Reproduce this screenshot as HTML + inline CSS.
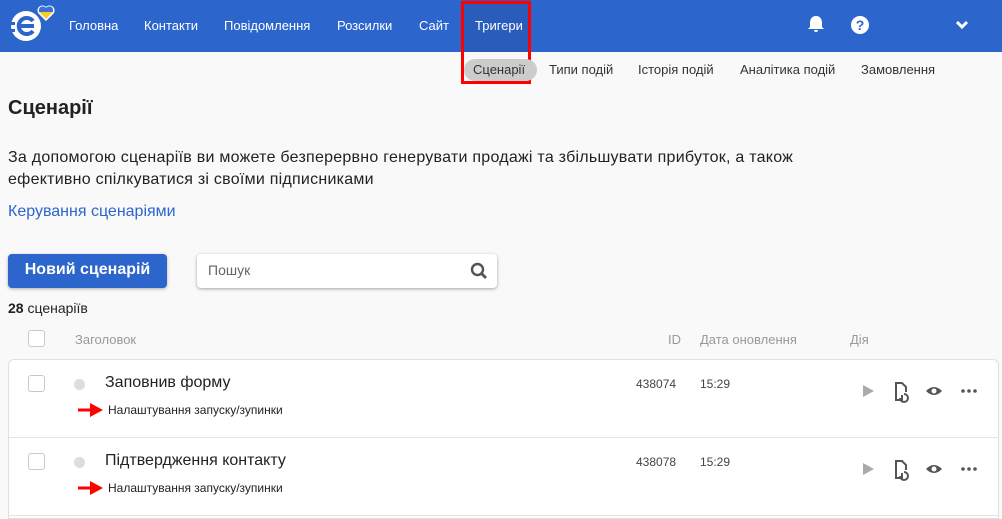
<!DOCTYPE html>
<html><head><meta charset="utf-8"><style>
*{box-sizing:border-box;margin:0;padding:0}
body{width:1002px;height:519px;overflow:hidden;background:#f9f9f9;font-family:"Liberation Sans",sans-serif;color:#222;position:relative}
.nav{position:absolute;left:0;top:0;width:1002px;height:52px;background:#2c65cc}
.nav a{position:absolute;top:18px;color:#fff;font-size:13px;text-decoration:none}
.abs{position:absolute}
.sub{position:absolute;top:62px;font-size:13px;color:#333}
.cb{position:absolute;width:17px;height:17px;border:1px solid #c8c8c8;border-radius:3px;background:#fff}
.dot{position:absolute;width:11px;height:11px;border-radius:50%;background:#ddd}
</style></head><body>
<div class="nav">
<svg class="abs" style="left:6px;top:4px" width="50" height="40" viewBox="0 0 50 40">
<circle cx="20" cy="22" r="15" fill="#fff"/>
<path d="M12 22 H28 M27 17 A8 8 0 1 0 27 27" stroke="#2c65cc" stroke-width="4" fill="none"/>
<rect x="4" y="18" width="5" height="3" fill="#2c65cc"/><rect x="4" y="25" width="5" height="3" fill="#2c65cc"/>
<path d="M40 16 L33 9 A4 4 0 0 1 40 4 A4 4 0 0 1 47 9 Z" fill="#f5d020" stroke="#fff" stroke-width="1.5"/>
<path d="M33 5 A4 4 0 0 1 40 4 A4 4 0 0 1 47 5 L47 8 L33 8Z" fill="#3a70d8"/>
</svg>
<a style="left:69px">Головна</a><a style="left:144px">Контакти</a><a style="left:224px">Повідомлення</a><a style="left:337px">Розсилки</a><a style="left:419px">Сайт</a>
<div class="abs" style="left:463px;top:0;width:68px;height:52px;background:#2a5cbc"></div>
<a style="left:475px">Тригери</a>
<svg class="abs" style="left:806px;top:14px" width="20" height="20" viewBox="0 0 20 20"><path d="M10 2 C6 2 4 5 4 9 V13 L2 15 H18 L16 13 V9 C16 5 14 2 10 2Z M8 16 A2 2 0 0 0 12 16Z" fill="#fff"/></svg>
<div class="abs" style="left:851px;top:16px;width:18px;height:18px;border-radius:50%;background:#fff;color:#2c65cc;font-weight:bold;font-size:14px;text-align:center;line-height:18px">?</div>
<svg class="abs" style="left:955px;top:20px" width="14" height="10" viewBox="0 0 14 10"><path d="M2 2 L7 7 L12 2" stroke="#fff" stroke-width="3" fill="none"/></svg>
</div>
<div class="abs" style="left:461px;top:1px;width:70px;height:83px;border:3px solid #f00"></div>
<div class="abs" style="left:464px;top:59px;width:73px;height:22px;background:#ccc;border-radius:11px"></div>
<div class="sub" style="left:473px">Сценарії</div>
<div class="sub" style="left:549px">Типи подій</div>
<div class="sub" style="left:638px">Історія подій</div>
<div class="sub" style="left:740px">Аналітика подій</div>
<div class="sub" style="left:861px">Замовлення</div>
<div class="abs" style="left:8px;top:97px;font-size:20px;font-weight:bold">Сценарії</div>
<div class="abs" style="left:8px;top:147px;font-size:16px;line-height:22px;width:820px;letter-spacing:0.25px">За допомогою сценаріїв ви можете безперервно генерувати продажі та збільшувати прибуток, а також ефективно спілкуватися зі своїми підписниками</div>
<div class="abs" style="left:8px;top:203px;font-size:16px;color:#2c65cc">Керування сценаріями</div>
<div class="abs" style="left:8px;top:254px;width:159px;height:34px;background:#2c65cc;border-radius:4px;color:#fff;font-size:16px;font-weight:bold;text-align:center;line-height:32px;box-shadow:0 1px 3px rgba(0,0,0,.3)">Новий сценарій</div>
<div class="abs" style="left:197px;top:254px;width:300px;height:34px;background:#fff;border-radius:4px;box-shadow:0 1px 3px rgba(0,0,0,.35)"><span class="abs" style="left:11px;top:8px;font-size:14px;color:#666">Пошук</span>
<svg class="abs" style="left:273px;top:8px" width="18" height="18" viewBox="0 0 18 18"><circle cx="7.5" cy="7.5" r="5.5" stroke="#555" stroke-width="2.4" fill="none"/><path d="M11.5 11.5 L16 16" stroke="#555" stroke-width="2.8"/></svg></div>
<div class="abs" style="left:8px;top:300px;font-size:14px"><b>28</b> сценаріїв</div>
<div class="cb" style="left:28px;top:330px"></div>
<div class="abs" style="left:75px;top:332px;font-size:13px;color:#999">Заголовок</div>
<div class="abs" style="left:668px;top:332px;font-size:13px;color:#999">ID</div>
<div class="abs" style="left:700px;top:332px;font-size:13px;color:#999">Дата оновлення</div>
<div class="abs" style="left:850px;top:332px;font-size:13px;color:#999">Дія</div>
<div class="abs" style="left:8px;top:359px;width:991px;height:160px;border:1px solid #e0e0e0;border-radius:6px 6px 0 0;background:#fff"></div>
<div class="abs" style="left:9px;top:437px;width:989px;height:1px;background:#e4e4e4"></div>
<div class="abs" style="left:9px;top:515px;width:989px;height:1px;background:#e4e4e4"></div>
<div class="cb" style="left:28px;top:375px"></div><div class="dot" style="left:74px;top:379px"></div>
<div class="abs" style="left:105px;top:374px;font-size:16px">Заповнив форму</div>
<div class="cb" style="left:28px;top:453px"></div><div class="dot" style="left:74px;top:457px"></div>
<div class="abs" style="left:105px;top:452px;font-size:16px">Підтвердження контакту</div>
<svg class="abs" style="left:78px;top:402px" width="26" height="16"><path d="M0 6.5 H12 V1 L25 8 L12 15 V9.5 H0Z" fill="#f00"/></svg>
<div class="abs" style="left:108px;top:403px;font-size:12px">Налаштування запуску/зупинки</div>
<svg class="abs" style="left:78px;top:480px" width="26" height="16"><path d="M0 6.5 H12 V1 L25 8 L12 15 V9.5 H0Z" fill="#f00"/></svg>
<div class="abs" style="left:108px;top:481px;font-size:12px">Налаштування запуску/зупинки</div>
<div class="abs" style="left:636px;top:377px;font-size:12px;color:#444">438074</div>
<div class="abs" style="left:700px;top:377px;font-size:12px;color:#444">15:29</div>
<div class="abs" style="left:636px;top:455px;font-size:12px;color:#444">438078</div>
<div class="abs" style="left:700px;top:455px;font-size:12px;color:#444">15:29</div>
<svg class="abs" style="left:860px;top:381px" width="120" height="22" viewBox="0 0 120 22">
<path d="M3 4 L14 10 L3 16Z" fill="#aaa"/>
<path d="M42 14 V19 H36 V2 H42 L46 6 V11" stroke="#555" stroke-width="2" fill="none"/><path d="M44 13 A4 4 0 1 1 40 17" stroke="#555" stroke-width="2" fill="none"/>
<path d="M66 10 Q74 2 82 10 Q74 18 66 10Z" fill="#555"/><circle cx="74" cy="10" r="2.5" fill="#fff"/>
<circle cx="103" cy="10" r="1.8" fill="#555"/><circle cx="109" cy="10" r="1.8" fill="#555"/><circle cx="115" cy="10" r="1.8" fill="#555"/>
</svg>
<svg class="abs" style="left:860px;top:459px" width="120" height="22" viewBox="0 0 120 22">
<path d="M3 4 L14 10 L3 16Z" fill="#aaa"/>
<path d="M42 14 V19 H36 V2 H42 L46 6 V11" stroke="#555" stroke-width="2" fill="none"/><path d="M44 13 A4 4 0 1 1 40 17" stroke="#555" stroke-width="2" fill="none"/>
<path d="M66 10 Q74 2 82 10 Q74 18 66 10Z" fill="#555"/><circle cx="74" cy="10" r="2.5" fill="#fff"/>
<circle cx="103" cy="10" r="1.8" fill="#555"/><circle cx="109" cy="10" r="1.8" fill="#555"/><circle cx="115" cy="10" r="1.8" fill="#555"/>
</svg>
</body></html>
